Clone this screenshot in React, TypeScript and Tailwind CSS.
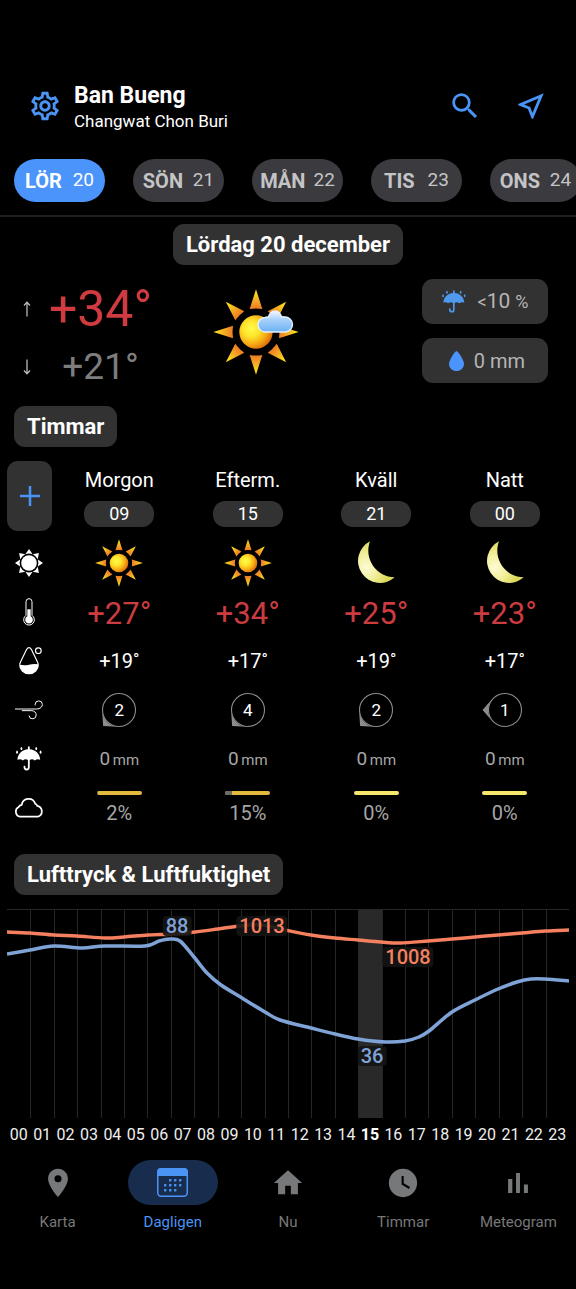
import type { ReactNode } from "react";
import {
  MdHome,
  MdLocationOn,
  MdOutlineNearMe,
  MdOutlineSettings,
  MdSearch,
  MdWatchLater,
} from "react-icons/md";

const RAYS = [0, 45, 90, 135, 180, 225, 270, 315];

function SunIcon({ className, cloudy = false }: { className: string; cloudy?: boolean }) {
  return (
    <svg viewBox="-129 -129 258 258" className={className} aria-hidden="true">
      <defs>
        <radialGradient id="sunCore" cx="0.36" cy="0.4" r="0.68">
          <stop offset="0" stopColor="#fffb4a" />
          <stop offset="0.35" stopColor="#fde62c" />
          <stop offset="0.7" stopColor="#f7a814" />
          <stop offset="1" stopColor="#d9650c" />
        </radialGradient>
        <linearGradient id="sunRay" x1="0" y1="0" x2="0" y2="1">
          <stop offset="0" stopColor="#f6ee1c" />
          <stop offset="0.5" stopColor="#f5b324" />
          <stop offset="1" stopColor="#ee7a22" />
        </linearGradient>
        <linearGradient id="cloudFill" x1="0" y1="0" x2="0" y2="1">
          <stop offset="0" stopColor="#f4f9ff" />
          <stop offset="0.4" stopColor="#a9d2fb" />
          <stop offset="1" stopColor="#6cb0f3" />
        </linearGradient>
      </defs>
      {RAYS.map((angle) => (
        <path key={angle} d="M0-128L19-69Q0-72-19-69Z" fill="url(#sunRay)" transform={`rotate(${angle})`} />
      ))}
      <circle r="50" fill="url(#sunCore)" />
      {cloudy && (
        <path
          d="M28 0A22 22 0 0 1 28-44Q32-46 38-44A19 19 0 0 1 76-44Q80-47 86-45A22.500 22.500 0 0 1 88 0Z"
          fill="url(#cloudFill)"
          stroke="#e6f2ff"
          strokeWidth="4"
          strokeLinejoin="round"
        />
      )}
    </svg>
  );
}

function MoonIcon({ className }: { className: string }) {
  return (
    <svg viewBox="0 0 114 129" className={className} aria-hidden="true">
      <defs>
        <radialGradient id="moonFill" cx="0.22" cy="0.62" r="0.62">
          <stop offset="0" stopColor="#fdfbd6" />
          <stop offset="0.5" stopColor="#f3ef9c" />
          <stop offset="1" stopColor="#dcd95c" />
        </radialGradient>
      </defs>
      <path d="M39 1A66 66 0 1 0 113 109A80 80 0 0 1 39 1Z" fill="url(#moonFill)" />
    </svg>
  );
}

function UmbrellaIcon({ className }: { className: string }) {
  return (
    <svg viewBox="0 0 72 72" className={className} fill="currentColor" aria-hidden="true">
      <path d="M33 9V3a2.500 2.500 0 0 1 5 0v6C53 10 66 21 67 38C62 36 57 36 52 40C47 36 42 36 38 39V59a8.500 8.500 0 0 1-17 0v-2a2.500 2.500 0 0 1 5 0v2a3.500 3.500 0 0 0 7 0V39C29 36 24 36 19 40C14 36 9 36 4 38C5 21 18 10 33 9Z" />
      <ellipse cx="3" cy="17" rx="2.500" ry="4.500" />
      <ellipse cx="15" cy="7" rx="2.500" ry="4.500" />
      <ellipse cx="56" cy="7" rx="2.500" ry="4.500" />
      <ellipse cx="68" cy="17" rx="2.500" ry="4.500" />
    </svg>
  );
}

function WhiteSunIcon() {
  return (
    <svg viewBox="-43 -43 86 86" className="size-7" fill="currentColor" aria-hidden="true">
      <circle r="24" />
      {RAYS.map((angle) => (
        <path key={angle} d="M0-43L11-27Q0-31-11-27Z" transform={`rotate(${angle})`} />
      ))}
    </svg>
  );
}

function ThermometerIcon() {
  return (
    <svg viewBox="0 0 84 84" className="size-7" aria-hidden="true">
      <path
        d="M33 52V11a9 9 0 0 1 18 0V52a16 16 0 1 1-18 0Z"
        fill="none"
        stroke="currentColor"
        strokeWidth="3"
      />
      <path d="M37 34h10V55a11.500 11.500 0 1 1-10 0Z" fill="currentColor" />
    </svg>
  );
}

function DewPointIcon() {
  return (
    <svg viewBox="0 0 84 84" className="size-7" aria-hidden="true">
      <path
        d="M14 52C17 41 30 18 35 7Q42-3 49 7C54 18 67 41 70 52"
        fill="none"
        stroke="currentColor"
        strokeWidth="3.500"
      />
      <path d="M12 52Q27 57 42 53T72 52A30 30 0 0 1 12 52Z" fill="currentColor" />
      <circle cx="70" cy="11" r="8.500" fill="none" stroke="currentColor" strokeWidth="3.500" />
    </svg>
  );
}

function WindIcon() {
  return (
    <svg viewBox="0 0 86 60" className="h-5 w-7" fill="none" stroke="currentColor" strokeWidth="3" aria-hidden="true">
      <path d="M0 27H66C78 27 84 20 84 13A11 11 0 0 0 62 13V16" />
      <path d="M21 32H50C60 32 65 38 65 45A11 11 0 0 1 43 47" />
    </svg>
  );
}

function CloudIcon() {
  return (
    <svg viewBox="0 0 86 58" className="h-5 w-[30px]" fill="none" stroke="currentColor" strokeWidth="5" aria-hidden="true">
      <path d="M17 54A15 15 0 0 1 13 26A14 14 0 0 1 22 20A20 20 0 0 1 61 17Q65 17 67 23A16 16 0 0 1 69 54Z" strokeLinejoin="round" />
    </svg>
  );
}

function ArrowIcon({ down = false }: { down?: boolean }) {
  return (
    <svg
      viewBox="0 0 16 16"
      className={down ? "size-4 rotate-180" : "size-4"}
      fill="none"
      stroke="#b8b8b8"
      strokeWidth="1.300"
      aria-hidden="true"
    >
      <path d="M8 15.500V1.500M5 4.500L8 1.200L11 4.500" />
    </svg>
  );
}

function CalendarIcon() {
  const dots = [
    [12, 11], [17, 11], [22, 11],
    [7, 16], [12, 16], [17, 16], [22, 16],
    [7, 21], [12, 21], [17, 21],
  ];
  return (
    <svg viewBox="0 0 31 29" className="h-[29px] w-[31px]" fill="currentColor" aria-hidden="true">
      <rect x="0.750" y="0.750" width="29.500" height="27.500" rx="3.500" fill="none" stroke="currentColor" strokeWidth="1.500" />
      <path d="M0 8V4a4 4 0 0 1 4-4h23a4 4 0 0 1 4 4v4Z" />
      {dots.map(([x, y]) => (
        <rect key={`${x}-${y}`} x={x} y={y} width="2.400" height="2.400" rx="0.600" />
      ))}
    </svg>
  );
}

function BarsIcon() {
  return (
    <svg viewBox="0 0 24 24" className="size-[34px]" fill="currentColor" aria-hidden="true">
      <path d="M5 9.200h3V19H5zM10.600 5h2.800v14h-2.800zM16.200 13H19v6h-2.800z" />
    </svg>
  );
}

function WindBadge({ speed, angle }: { speed: number; angle: number }) {
  return (
    <div className="mx-auto grid size-12 place-items-center">
      <svg viewBox="-24 -24 48 48" className="col-start-1 row-start-1 size-12" aria-hidden="true">
        <circle r="16.500" fill="none" stroke="#8c8c8c" strokeWidth="1.100" />
        <path d="M-22.500 0L-13-10.800A17 17 0 0 0-13 10.800Z" fill="#8c8c8c" transform={`rotate(${angle})`} />
      </svg>
      <span className="col-start-1 row-start-1 text-[17px] leading-5">{speed}</span>
    </div>
  );
}

const days = [
  { name: "LÖR", date: 20 },
  { name: "SÖN", date: 21 },
  { name: "MÅN", date: 22 },
  { name: "TIS", date: 23 },
  { name: "ONS", date: 24 },
];

const parts = [
  { name: "Morgon", hour: "09", night: false, temp: "+27", dew: "+19", wind: 2, angle: -45, cloud: 2 },
  { name: "Efterm.", hour: "15", night: false, temp: "+34", dew: "+17", wind: 4, angle: -45, cloud: 15 },
  { name: "Kväll", hour: "21", night: true, temp: "+25", dew: "+19", wind: 2, angle: -45, cloud: 0 },
  { name: "Natt", hour: "00", night: true, temp: "+23", dew: "+17", wind: 1, angle: 0, cloud: 0 },
];
type Part = (typeof parts)[number];

const rows: { label: string; icon: ReactNode; cell: (p: Part) => ReactNode }[] = [
  {
    label: "Väder",
    icon: <WhiteSunIcon />,
    cell: (p) =>
      p.night ? <MoonIcon className="mx-auto h-[43px] w-[38px]" /> : <SunIcon className="mx-auto size-12" />,
  },
  {
    label: "Temperatur",
    icon: <ThermometerIcon />,
    cell: (p) => <span className="block pt-1 text-[31px] leading-9 text-[#cb3c40]">{p.temp}°</span>,
  },
  {
    label: "Daggpunkt",
    icon: <DewPointIcon />,
    cell: (p) => (
      <span className="block text-[20px] leading-6">
        {p.dew}
        <span className="align-[3px] text-[17px] leading-4">°</span>
      </span>
    ),
  },
  { label: "Vind", icon: <WindIcon />, cell: (p) => <WindBadge speed={p.wind} angle={p.angle} /> },
  {
    label: "Nederbörd",
    icon: <UmbrellaIcon className="size-[26px]" />,
    cell: () => (
      <span className="block pt-0.5 text-[19px] leading-6 text-[#a6a6a6]">
        0 <span className="-ml-0.5 text-[15px]">mm</span>
      </span>
    ),
  },
  {
    label: "Molnighet",
    icon: <CloudIcon />,
    cell: (p) => (
      <div className="flex flex-col items-center gap-1 pt-0.5">
        <div
          className={
            p.night
              ? "h-1 w-[45px] overflow-hidden rounded-full bg-[#f6e66c]"
              : "h-1 w-[45px] overflow-hidden rounded-full bg-[#e3b93e]"
          }
        >
          <div className="h-full bg-[#6b6b6b]" style={{ width: `${p.cloud}%` }} />
        </div>
        <span className="text-[20px] leading-7 text-[#a6a6a6]">{p.cloud}%</span>
      </div>
    ),
  },
];

const CHART_W = 562;
const CHART_H = 209;

const pressure: [number, number][] = [
  [0, 23], [23, 24], [47, 26], [70, 27], [98, 29], [117, 28], [141, 26], [165, 25], [188, 23], [211, 20],
  [233, 17], [255, 16], [278, 21], [304, 26], [328, 29], [351, 31], [374, 33], [393, 34], [421, 32],
  [445, 30], [468, 28], [491, 26], [515, 24], [538, 22], [562, 21],
];

const humidity: [number, number][] = [
  [0, 45], [23, 41], [47, 37], [75, 39], [98, 37], [138, 37], [152, 32], [163, 30], [173, 32], [187, 48],
  [200, 64], [214, 76], [235, 89], [258, 103], [273, 111], [304, 119], [328, 125],
  [351, 130], [378, 133], [398, 132], [412, 128], [422, 122], [445, 103], [468, 91], [491, 80], [510, 73],
  [524, 70], [538, 70], [562, 72],
];

function smoothPath(points: [number, number][]) {
  return points.slice(1).reduce((d, [x, y], i) => {
    const [x0, y0] = points[i];
    const [px, py] = points[Math.max(i - 1, 0)];
    const [nx, ny] = points[Math.min(i + 2, points.length - 1)];
    return `${d}C${x0 + (x - px) / 6} ${y0 + (y - py) / 6} ${x - (nx - x0) / 6} ${y - (ny - y0) / 6} ${x} ${y}`;
  }, `M${points[0][0]} ${points[0][1]}`);
}

const marks = [
  { text: "88", x: 170, y: 17, color: "text-[#7fa3d6]" },
  { text: "1013", x: 255, y: 17, color: "text-[#f4805f]" },
  { text: "1008", x: 401, y: 48, color: "text-[#f4805f]" },
  { text: "36", x: 365, y: 147, color: "text-[#7fa3d6]" },
];

const hours = Array.from({ length: 24 }, (_, h) => String(h).padStart(2, "0"));
const CURRENT_HOUR = "15";

function Chart() {
  return (
    <div className="mx-[7px] mt-[14px]">
      <div className="relative">
        <div className="grid h-[209px] grid-cols-24 border-t border-[#262626]">
          {hours.map((h) => (
            <div
              key={h}
              className={
                h === CURRENT_HOUR
                  ? "border-l border-[#262626] bg-[#292929]"
                  : "border-l border-[#262626] first:border-l-0"
              }
            />
          ))}
        </div>
        <svg
          viewBox={`0 0 ${CHART_W} ${CHART_H}`}
          preserveAspectRatio="none"
          className="absolute inset-0 size-full"
          fill="none"
          strokeWidth="3.500"
          aria-hidden="true"
        >
          <path d={smoothPath(pressure)} stroke="#f4805f" vectorEffect="non-scaling-stroke" />
          <path d={smoothPath(humidity)} stroke="#7fa3d6" vectorEffect="non-scaling-stroke" />
        </svg>
        {marks.map((m) => (
          <span
            key={m.text}
            className={`absolute -translate-x-1/2 -translate-y-1/2 rounded-sm bg-[#141414]/90 px-[3px] text-[20px] leading-5 font-medium ${m.color}`}
            style={{ left: `${(m.x / CHART_W) * 100}%`, top: `${(m.y / CHART_H) * 100}%` }}
          >
            {m.text}
          </span>
        ))}
      </div>
      <div className="grid grid-cols-24 pt-0.5 text-center text-[16px] leading-[30px] text-[#efefef]">
        {hours.map((h) => (
          <span key={h} className={h === CURRENT_HOUR ? "font-bold text-white" : undefined}>
            {h}
          </span>
        ))}
      </div>
    </div>
  );
}

function SectionTitle({ children }: { children: ReactNode }) {
  return (
    <h2 className="w-fit rounded-[11px] bg-[#323232] px-[13px] pt-px text-[22px] leading-10 font-bold">{children}</h2>
  );
}

const tabs = [
  { label: "Karta", icon: <MdLocationOn className="size-[34px]" /> },
  { label: "Dagligen", icon: <CalendarIcon />, active: true },
  { label: "Nu", icon: <MdHome className="size-[34px]" /> },
  { label: "Timmar", icon: <MdWatchLater className="size-[34px]" /> },
  { label: "Meteogram", icon: <BarsIcon /> },
];

export default function App() {
  return (
    <div className="flex min-h-screen flex-col overflow-x-hidden bg-black font-['Roboto',sans-serif] text-white">
      <header className="flex items-start pt-[83px] pr-7 pl-7">
        <button type="button" aria-label="Inställningar" className="mt-1.5 mr-3 text-[#4a94f5]">
          <MdOutlineSettings className="size-[34px]" />
        </button>
        <div className="flex-1">
          <h1 className="text-[23px] leading-[26px] font-bold">Ban Bueng</h1>
          <p className="text-[17px] leading-6">Changwat Chon Buri</p>
        </div>
        <div className="mt-1.5 flex gap-8 text-[#4a94f5]">
          <button type="button" aria-label="Sök">
            <MdSearch className="size-[34px]" />
          </button>
          <button type="button" aria-label="Min position">
            <MdOutlineNearMe className="size-[34px]" />
          </button>
        </div>
      </header>

      <nav aria-label="Dagar" className="mt-[26px] flex gap-7 overflow-hidden border-b-2 border-[#1e1e1e] pb-[13px] pl-[14px]">
        {days.map((d, i) => (
          <button
            key={d.name}
            type="button"
            aria-pressed={i === 0}
            className={
              i === 0
                ? "flex h-[43px] w-[91px] shrink-0 items-center justify-evenly rounded-full bg-[#4a94fb] text-[20px] text-white"
                : "flex h-[43px] w-[91px] shrink-0 items-center justify-evenly rounded-full bg-[#3b3a3e] text-[20px] text-[#c4c4c6]"
            }
          >
            <span className="font-bold">{d.name}</span>
            <span className="text-[19px]">{d.date}</span>
          </button>
        ))}
      </nav>

      <main className="flex-1">
        <div className="mt-[7px] flex justify-center">
          <SectionTitle>Lördag 20 december</SectionTitle>
        </div>

        <section className="mt-[14px] flex items-start pr-7 pl-[19px]">
          <div className="flex w-[135px] flex-col">
            <div className="flex items-center gap-3">
              <ArrowIcon />
              <span className="flex-1 text-center text-[50px] leading-[60px] text-[#cf3b40]">+34°</span>
            </div>
            <div className="flex items-center gap-3">
              <ArrowIcon down />
              <span className="flex-1 text-center text-[37px] leading-[56px] text-[#7d7d7d]">+21°</span>
            </div>
          </div>
          <SunIcon cloudy className="mt-[10px] ml-[59px] size-[86px]" />
          <div className="ml-auto flex w-[126px] flex-col gap-[14px] text-[20px] text-[#b5b5b5]">
            <div className="flex h-[45px] items-center justify-center gap-3 rounded-[11px] bg-[#323232]">
              <UmbrellaIcon className="size-6 text-[#4f98ee]" />
              <span>
                <span className="text-[18px]">&lt;</span>
                <span className="text-[21px]">10</span> <span className="text-[18px]">%</span>
              </span>
            </div>
            <div className="flex h-[45px] items-center justify-center gap-[10px] rounded-[11px] bg-[#323232] pl-1">
              <svg viewBox="0 0 45 60" className="h-5 w-[15px]" fill="#4a94fb" aria-hidden="true">
                <path d="M22.500 0C27 0 45 27 45 39A22.500 21.500 0 0 1 0 39C0 27 18 0 22.500 0Z" />
              </svg>
              <span>0 mm</span>
            </div>
          </div>
        </section>

        <section className="mt-[11px]">
          <div className="pl-[14px]">
            <SectionTitle>Timmar</SectionTitle>
          </div>
          <div className="mt-[14px] px-[7px]">
            <table className="w-full table-fixed border-collapse text-center">
              <thead>
                <tr className="h-[77px] align-top">
                  <th className="w-12 p-0">
                    <button
                      type="button"
                      aria-label="Lägg till"
                      className="flex h-[70px] w-[45px] items-center justify-center rounded-[11px] bg-[#323232]"
                    >
                      <svg viewBox="0 0 20 20" className="size-5" stroke="#4a94f5" strokeWidth="2.500" aria-hidden="true">
                        <path d="M10 0V20M0 10H20" />
                      </svg>
                    </button>
                  </th>
                  {parts.map((p) => (
                    <th key={p.name} scope="col" className="p-0 font-normal">
                      <span className="block pt-[5px] text-[20px] leading-7">{p.name}</span>
                      <span className="mx-auto mt-[7px] block w-[70px] rounded-xl bg-[#323232] text-[18px] leading-[26px]">
                        {p.hour}
                      </span>
                    </th>
                  ))}
                </tr>
              </thead>
              <tbody>
                {rows.map((r) => (
                  <tr key={r.label} className="h-[49px]">
                    <th scope="row" aria-label={r.label} className="p-0">
                      <div className="flex w-11 justify-center">{r.icon}</div>
                    </th>
                    {parts.map((p) => (
                      <td key={p.name} className="p-0">
                        {r.cell(p)}
                      </td>
                    ))}
                  </tr>
                ))}
              </tbody>
            </table>
          </div>
        </section>

        <section className="mt-[22px]">
          <div className="pl-[14px]">
            <SectionTitle>Lufttryck &amp; Luftfuktighet</SectionTitle>
          </div>
          <Chart />
        </section>
      </main>

      <nav aria-label="Huvudmeny" className="grid grid-cols-5 pt-[10px] pb-[55px]">
        {tabs.map((t) => (
          <a
            key={t.label}
            href={`#${t.label.toLowerCase()}`}
            aria-current={t.active ? "page" : undefined}
            className={
              t.active ? "flex flex-col items-center text-[#4a94f5]" : "flex flex-col items-center text-[#777879]"
            }
          >
            <span
              className={
                t.active
                  ? "flex h-[45px] w-[90px] items-center justify-center rounded-full bg-[#182d4e]"
                  : "flex h-[45px] w-[90px] items-center justify-center"
              }
            >
              {t.icon}
            </span>
            <span className="mt-[5px] text-[15px] leading-6">{t.label}</span>
          </a>
        ))}
      </nav>
    </div>
  );
}
